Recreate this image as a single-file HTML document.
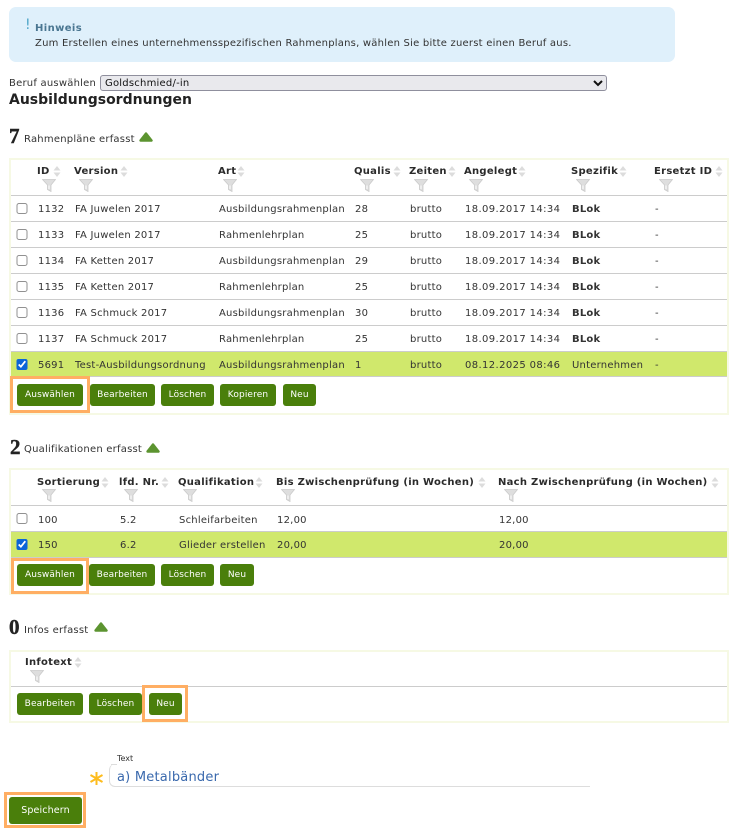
<!DOCTYPE html>
<html><head><meta charset="utf-8"><style>
html,body{margin:0;padding:0;background:#fff;width:735px;height:829px;overflow:hidden}
body{position:relative;font-family:"DejaVu Sans",Verdana,sans-serif;font-size:10px;color:#333;letter-spacing:.22px}
.a,.t,.h,.b,.box,.row,.o,.s,.f,.tri{position:absolute}
.t,.h,.b{white-space:nowrap}
.t{line-height:14px}
.h{font-weight:bold;font-size:10px;line-height:14px;color:#2b2b2b;top:0;letter-spacing:.28px}
.box{border:2px solid #f6f9e4;box-sizing:border-box;left:9px;width:720px}
.row{left:11px;width:716px;height:26px;border-top:1px solid #ccc;box-sizing:border-box}
.row .t{top:6.5px}
.row .t:nth-of-type(6){letter-spacing:.38px}
.row.g{background:#d0e86c}
.row input{position:absolute;left:5px;top:6.5px;width:11.5px;height:11.5px;margin:0;accent-color:#0b65d8;opacity:.8}
.row input:checked{opacity:1}
.b{background:#4a7f0b;color:#fff;border-radius:3px;height:22px;line-height:22px;text-align:center;font-size:9px;letter-spacing:.12px}
.o{border:3px solid #ffae63;box-sizing:border-box}
.big{font-family:"Liberation Serif",serif;font-weight:bold;font-size:21px;color:#222;line-height:22px;-webkit-text-stroke:.4px #222}
.tri{width:14px;height:10px}
.s{width:8px;height:13px}
.f{width:14px;height:13px}
</style></head><body>
<svg width="0" height="0" style="position:absolute"><defs>
<g id="so"><path d="M0.5 5.5 4 1 7.5 5.5Z" fill="#dcdcdc"/><path d="M0.5 7.5 4 12 7.5 7.5Z" fill="#dcdcdc"/></g>
<g id="fu"><path d="M0.5 0.5H13.5L9 6V12.5L5.5 10.5V6Z" fill="#dedede" stroke="#cacaca" stroke-width=".8"/><path d="M7 6.5V10" stroke="#fff" stroke-width="1"/></g>
<g id="tr"><path d="M1.5 8.5 7 1.5 12.5 8.5Z" fill="#5c9430" stroke="#5c9430" stroke-width="2.4" stroke-linejoin="round"/></g>
</defs></svg>

<div class="a" style="left:9px;top:7px;width:666px;height:55px;background:#dff0fb;border-radius:7px"></div>
<div class="t" style="left:25px;top:18px;font-size:14px;color:#4fa6c8">!</div>
<div class="t" style="left:35px;top:22px;font-weight:bold;color:#4a7691;letter-spacing:.4px">Hinweis</div>
<div class="t" style="left:35px;top:36.5px;color:#333">Zum Erstellen eines unternehmensspezifischen Rahmenplans, wählen Sie bitte zuerst einen Beruf aus.</div>

<div class="t" style="left:9px;top:77px">Beruf auswählen</div>
<select style="position:absolute;left:100px;top:75px;width:507px;height:16px;font:10px 'DejaVu Sans',sans-serif;letter-spacing:.22px;color:#111;padding:0;margin:0;box-sizing:border-box;background:#e9e9ed;border:1px solid #8f8f9d;border-radius:3px"><option>Goldschmied/-in</option></select>
<div class="t" style="left:9px;top:92px;font-weight:bold;font-size:14px;line-height:17px;color:#222;letter-spacing:0">Ausbildungsordnungen</div>

<div class="a big" style="left:9px;top:125px">7</div>
<div class="t" style="left:24px;top:132.5px">Rahmenpläne erfasst</div>
<svg class="tri" style="left:139px;top:132px"><use href="#tr"/></svg>

<div class="box" style="top:158px;height:257px"></div>
<div class="a" style="left:11px;top:165px;width:716px;height:14px">
<span class="h" style="left:26px">ID</span><span class="h" style="left:63px">Version</span><span class="h" style="left:207px">Art</span><span class="h" style="left:343px">Qualis</span><span class="h" style="left:398px">Zeiten</span><span class="h" style="left:453px">Angelegt</span><span class="h" style="left:560px">Spezifik</span><span class="h" style="left:643px">Ersetzt ID</span>
</div>
<svg class="s" style="left:53px;top:165px"><use href="#so"/></svg><svg class="s" style="left:120px;top:165px"><use href="#so"/></svg><svg class="s" style="left:237px;top:165px"><use href="#so"/></svg><svg class="s" style="left:393px;top:165px"><use href="#so"/></svg><svg class="s" style="left:448px;top:165px"><use href="#so"/></svg><svg class="s" style="left:518px;top:165px"><use href="#so"/></svg><svg class="s" style="left:619px;top:165px"><use href="#so"/></svg><svg class="s" style="left:715px;top:165px"><use href="#so"/></svg>
<svg class="f" style="left:42px;top:179px"><use href="#fu"/></svg><svg class="f" style="left:79px;top:179px"><use href="#fu"/></svg><svg class="f" style="left:223px;top:179px"><use href="#fu"/></svg><svg class="f" style="left:360px;top:179px"><use href="#fu"/></svg><svg class="f" style="left:414px;top:179px"><use href="#fu"/></svg><svg class="f" style="left:469px;top:179px"><use href="#fu"/></svg><svg class="f" style="left:576px;top:179px"><use href="#fu"/></svg><svg class="f" style="left:659px;top:179px"><use href="#fu"/></svg>

<div class="row" style="top:195px"><input type="checkbox"><span class="t" style="left:27px">1132</span><span class="t" style="left:64px">FA Juwelen 2017</span><span class="t" style="left:208px">Ausbildungsrahmenplan</span><span class="t" style="left:344px">28</span><span class="t" style="left:399px">brutto</span><span class="t" style="left:454px">18.09.2017 14:34</span><span class="t" style="left:561px"><b>BLok</b></span><span class="t" style="left:644px">-</span></div>
<div class="row" style="top:221px"><input type="checkbox"><span class="t" style="left:27px">1133</span><span class="t" style="left:64px">FA Juwelen 2017</span><span class="t" style="left:208px">Rahmenlehrplan</span><span class="t" style="left:344px">25</span><span class="t" style="left:399px">brutto</span><span class="t" style="left:454px">18.09.2017 14:34</span><span class="t" style="left:561px"><b>BLok</b></span><span class="t" style="left:644px">-</span></div>
<div class="row" style="top:247px"><input type="checkbox"><span class="t" style="left:27px">1134</span><span class="t" style="left:64px">FA Ketten 2017</span><span class="t" style="left:208px">Ausbildungsrahmenplan</span><span class="t" style="left:344px">29</span><span class="t" style="left:399px">brutto</span><span class="t" style="left:454px">18.09.2017 14:34</span><span class="t" style="left:561px"><b>BLok</b></span><span class="t" style="left:644px">-</span></div>
<div class="row" style="top:273px"><input type="checkbox"><span class="t" style="left:27px">1135</span><span class="t" style="left:64px">FA Ketten 2017</span><span class="t" style="left:208px">Rahmenlehrplan</span><span class="t" style="left:344px">25</span><span class="t" style="left:399px">brutto</span><span class="t" style="left:454px">18.09.2017 14:34</span><span class="t" style="left:561px"><b>BLok</b></span><span class="t" style="left:644px">-</span></div>
<div class="row" style="top:299px"><input type="checkbox"><span class="t" style="left:27px">1136</span><span class="t" style="left:64px">FA Schmuck 2017</span><span class="t" style="left:208px">Ausbildungsrahmenplan</span><span class="t" style="left:344px">30</span><span class="t" style="left:399px">brutto</span><span class="t" style="left:454px">18.09.2017 14:34</span><span class="t" style="left:561px"><b>BLok</b></span><span class="t" style="left:644px">-</span></div>
<div class="row" style="top:325px"><input type="checkbox"><span class="t" style="left:27px">1137</span><span class="t" style="left:64px">FA Schmuck 2017</span><span class="t" style="left:208px">Rahmenlehrplan</span><span class="t" style="left:344px">25</span><span class="t" style="left:399px">brutto</span><span class="t" style="left:454px">18.09.2017 14:34</span><span class="t" style="left:561px"><b>BLok</b></span><span class="t" style="left:644px">-</span></div>
<div class="row g" style="top:351px;border-bottom:1px solid #ccc;height:26px"><input type="checkbox" checked><span class="t" style="left:27px">5691</span><span class="t" style="left:64px">Test-Ausbildungsordnung</span><span class="t" style="left:208px">Ausbildungsrahmenplan</span><span class="t" style="left:344px">1</span><span class="t" style="left:399px">brutto</span><span class="t" style="left:454px">08.12.2025 08:46</span><span class="t" style="left:561px">Unternehmen</span><span class="t" style="left:644px">-</span></div>

<div class="o" style="left:10px;top:376px;width:80px;height:37px"></div>
<div class="b" style="left:17px;top:384px;width:66px">Auswählen</div>
<div class="b" style="left:90px;top:384px;width:65px">Bearbeiten</div>
<div class="b" style="left:161px;top:384px;width:53px">Löschen</div>
<div class="b" style="left:220px;top:384px;width:56px">Kopieren</div>
<div class="b" style="left:283px;top:384px;width:33px">Neu</div>

<div class="a big" style="left:10px;top:436px">2</div>
<div class="t" style="left:24px;top:442.5px">Qualifikationen erfasst</div>
<svg class="tri" style="left:146px;top:443px"><use href="#tr"/></svg>

<div class="box" style="top:468px;height:127px"></div>
<div class="a" style="left:11px;top:476px;width:716px;height:14px">
<span class="h" style="left:26px">Sortierung</span><span class="h" style="left:108px">lfd. Nr.</span><span class="h" style="left:167px">Qualifikation</span><span class="h" style="left:265px">Bis Zwischenprüfung (in Wochen)</span><span class="h" style="left:487px">Nach Zwischenprüfung (in Wochen)</span>
</div>
<svg class="s" style="left:101px;top:476px"><use href="#so"/></svg><svg class="s" style="left:161px;top:476px"><use href="#so"/></svg><svg class="s" style="left:255px;top:476px"><use href="#so"/></svg><svg class="s" style="left:478px;top:476px"><use href="#so"/></svg><svg class="s" style="left:711px;top:476px"><use href="#so"/></svg>
<svg class="f" style="left:42px;top:489px"><use href="#fu"/></svg><svg class="f" style="left:124px;top:489px"><use href="#fu"/></svg><svg class="f" style="left:183px;top:489px"><use href="#fu"/></svg><svg class="f" style="left:281px;top:489px"><use href="#fu"/></svg><svg class="f" style="left:504px;top:489px"><use href="#fu"/></svg>

<div class="row" style="top:505px"><input type="checkbox"><span class="t" style="left:27px;top:7.5px">100</span><span class="t" style="left:109px;top:7.5px">5.2</span><span class="t" style="left:168px;top:7.5px">Schleifarbeiten</span><span class="t" style="left:266px;top:7.5px">12,00</span><span class="t" style="left:488px;top:7.5px">12,00</span></div>
<div class="row g" style="top:531px;border-bottom:1px solid #ccc;height:27px"><input type="checkbox" checked><span class="t" style="left:27px">150</span><span class="t" style="left:109px">6.2</span><span class="t" style="left:168px">Glieder erstellen</span><span class="t" style="left:266px">20,00</span><span class="t" style="left:488px">20,00</span></div>

<div class="o" style="left:11px;top:558px;width:78px;height:36px"></div>
<div class="b" style="left:17px;top:564px;width:66px">Auswählen</div>
<div class="b" style="left:89px;top:564px;width:66px">Bearbeiten</div>
<div class="b" style="left:161px;top:564px;width:53px">Löschen</div>
<div class="b" style="left:220px;top:564px;width:34px">Neu</div>

<div class="a big" style="left:9px;top:616px">0</div>
<div class="t" style="left:24px;top:623.5px">Infos erfasst</div>
<svg class="tri" style="left:94px;top:622px"><use href="#tr"/></svg>

<div class="box" style="top:650px;height:73px"></div>
<div class="h" style="left:25px;top:656px">Infotext</div>
<svg class="s" style="left:74px;top:656px"><use href="#so"/></svg>
<svg class="f" style="left:30px;top:670px"><use href="#fu"/></svg>
<div class="row" style="top:686px;height:1px"></div>

<div class="b" style="left:17px;top:693px;width:66px">Bearbeiten</div>
<div class="b" style="left:89px;top:693px;width:53px">Löschen</div>
<div class="o" style="left:142px;top:685px;width:46px;height:37px"></div>
<div class="b" style="left:149px;top:693px;width:33px">Neu</div>

<div class="t" style="left:117px;top:752px;font-size:8px;color:#333;letter-spacing:0">Text</div>
<div class="a" style="left:109px;top:764px;width:481px;height:23px;box-sizing:border-box;border-bottom:1px solid #ddd;border-left:1px solid #ddd;border-radius:6px 0 0 6px"></div>
<div class="a" style="left:111px;top:764px;width:6px;height:1px;background:#ddd"></div>
<div class="t" style="left:117px;top:771px;font-size:13px;color:#3a69ad">a) Metalbänder</div>
<svg class="a" style="left:89px;top:771px" width="15" height="15" viewBox="0 0 15 15"><path d="M7.5 1V14M1.5 4L13.5 11M13.5 4L1.5 11" stroke="#fdbc1e" stroke-width="2" fill="none"/></svg>

<div class="o" style="left:4px;top:792px;width:82px;height:36px"></div>
<div class="b" style="left:9px;top:797px;width:73px;height:27px;line-height:27px;font-size:9.5px">Speichern</div>
</body></html>
